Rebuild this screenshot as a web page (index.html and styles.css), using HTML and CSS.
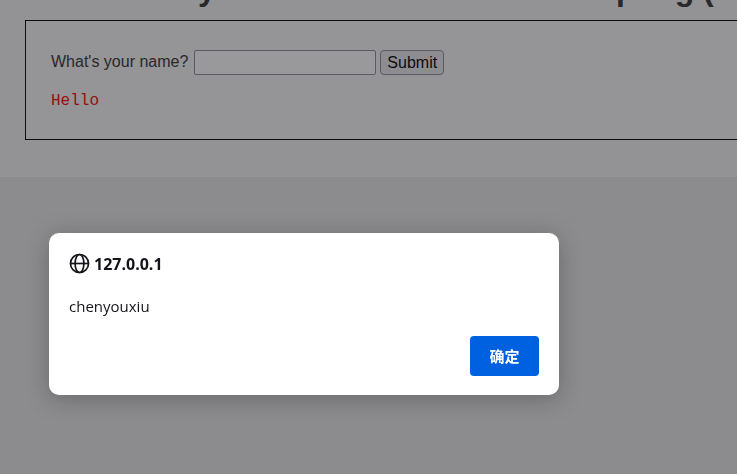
FILE: index.html
```
<!DOCTYPE html>
<html lang="en">
<head>
  <meta charset="UTF-8">
  <meta name="viewport" content="width=device-width, initial-scale=1.0">
  <title>Reflected Cross Site Scripting (XSS)</title>
  <link rel="stylesheet" href="styles.css">
</head>
<body>
  <main class="main-body">
    <h1>Vulnerability: Reflected Cross Site Scripting (XSS)</h1>
    <div class="vulnerable-area">
      <form class="name-form" onsubmit="return false;">
        <label for="name">What's your name?</label>
        <input type="text" id="name" name="name">
        <button type="submit">Submit</button>
      </form>
      <pre class="greeting">Hello</pre>
    </div>
  </main>

  <div class="overlay">
    <div class="alert" role="alertdialog" aria-labelledby="alert-host" aria-describedby="alert-text">
      <div class="alert-head">
        <svg class="globe" viewBox="0 0 20 20" fill="none" stroke="currentColor" stroke-width="1.6" aria-hidden="true">
          <circle cx="10" cy="10" r="8.6"/>
          <ellipse cx="10" cy="10" rx="4.2" ry="8.6"/>
          <path d="M1.4 10h17.2"/>
        </svg>
        <strong id="alert-host">127.0.0.1</strong>
      </div>
      <p class="alert-text" id="alert-text">chenyouxiu</p>
      <div class="alert-actions">
        <button type="button" class="ok" lang="zh-CN">确定</button>
      </div>
    </div>
  </div>
</body>
</html>
```
FILE: styles.css
```
:root {
  --page: #e7e7e7;
  --panel: #f4f4f4;
  --text: #333;
  --shade: rgba(28, 27, 34, 0.45);
  --accent: #0061e0;
}
* { box-sizing: border-box; }
body {
  margin: 0;
  min-height: 100vh;
  overflow: hidden;
  background: var(--page);
  color: var(--text);
  font-family: Arial, "Liberation Sans", sans-serif;
  font-size: 16px;
}
.main-body {
  display: flow-root;
  padding: 0 0 37px 25px;
  background: var(--panel);
}
h1 {
  margin: -29px 0 13px;
  overflow: hidden;
  font-size: 32px;
  line-height: 36px;
  white-space: nowrap;
}
.vulnerable-area {
  padding: 29px 25px 29px;
  border: 1px solid #000;
  border-right: 0;
  background: #f8f8f8;
}
.name-form {
  display: flex;
  align-items: center;
  gap: 4px;
}
.name-form label {
  padding: 0 2px 2px 0;
  line-height: 22px;
}
.name-form input {
  width: 182px;
  height: 25px;
  padding: 1px 2px;
  border: 1px solid #8f8f9d;
  border-radius: 2px;
  background: #fff;
  font: inherit;
}
.name-form button {
  height: 25px;
  padding: 0 6px;
  border: 1px solid #8f8f9d;
  border-radius: 4px;
  background: #e9e9ed;
  color: #000;
  font: inherit;
}
.greeting {
  margin: 17px 0 0;
  color: #f00;
  font-family: "Courier New", "Liberation Mono", monospace;
  font-size: 16px;
  line-height: 18px;
}
.overlay {
  position: fixed;
  inset: 0;
  padding: 233px 49px 0;
  background: var(--shade);
}
.alert {
  max-width: 510px;
  padding: 20px 20px 19px;
  border-radius: 10px;
  background: #fff;
  color: #15141a;
  box-shadow: 0 4px 24px rgba(0, 0, 0, 0.25);
  font-family: "Open Sans", "Noto Sans", "Noto Sans CJK SC", sans-serif;
  font-size: 15px;
  line-height: 20px;
}
.alert-head {
  display: flex;
  align-items: center;
  gap: 4px;
  font-size: 16px;
}
.globe { width: 21px; height: 21px; }
.alert-text { margin: 22px 0 20px; }
.alert-actions {
  display: flex;
  justify-content: flex-end;
}
.ok {
  height: 40px;
  min-width: 69px;
  padding: 0 16px 2px;
  border: 0;
  border-radius: 4px;
  background: var(--accent);
  color: #fff;
  font-family: "Noto Sans CJK SC", sans-serif;
  font-size: 15px;
  font-weight: 700;
}
```
